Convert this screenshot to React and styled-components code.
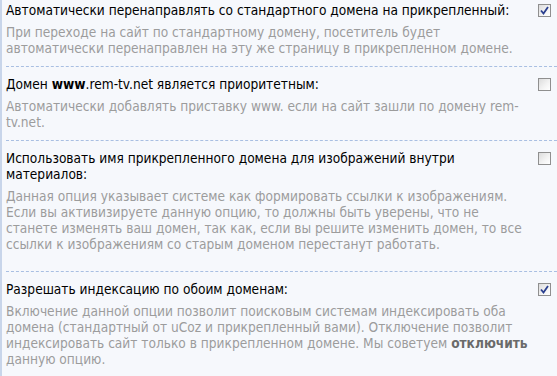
import React from 'react';
import styled, { createGlobalStyle } from 'styled-components';

const GlobalStyle = createGlobalStyle`
  html, body {
    margin: 0;
    padding: 0;
    background: #f6f8fc;
  }
`;

const Panel = styled.div`
  box-sizing: border-box;
  width: 557px;
  height: 376px;
  overflow: hidden;
  background: #f6f8fc;
  border-left: 2px solid #c8d5ea;
  padding: 2px 0 0 4px;
  font-family: 'DejaVu Sans Condensed', 'DejaVu Sans', sans-serif;
  font-size: 13.6px;
  line-height: 16px;
`;

const Row = styled.div`
  display: grid;
  grid-template-columns: 528px 1fr;
  padding: ${(p) => (p.first ? '0' : '9px')} 0 ${(p) => 10 + (p.extra || 0)}px 0;
  border-bottom: ${(p) => (p.last ? 'none' : '1px dashed #a9bfe2')};
`;

const Title = styled.div`
  color: #000;
  b {
    font-weight: bold;
  }
`;

const Desc = styled.div`
  color: #9c9c9c;
  margin-top: 6px;
  b {
    color: #6a6a6a;
    font-weight: bold;
  }
`;

const Box = styled.span`
  box-sizing: border-box;
  display: flex;
  align-items: center;
  justify-content: center;
  width: 13px;
  height: 13px;
  margin: 2px 0 0 4px;
  border: 1px solid #8f8f8f;
  background: linear-gradient(135deg, #dcdcdc 0%, #f4f4f4 60%, #ffffff 100%);
`;

const Check = ({ on }) => (
  <Box>
    {on && (
      <svg width="9" height="9" viewBox="0 0 9 9">
        <path d="M1 4.5 L3.5 7.5 L8 1" fill="none" stroke="#2a3f8f" strokeWidth="1.8" />
      </svg>
    )}
  </Box>
);

const options = [
  {
    title: 'Автоматически перенаправлять со стандартного домена на прикрепленный:',
    desc: 'При переходе на сайт по стандартному домену, посетитель будет автоматически перенаправлен на эту же страницу в прикрепленном домене.',
    on: true,
  },
  {
    title: (
      <>
        Домен <b>www</b>.rem-tv.net является приоритетным:
      </>
    ),
    desc: 'Автоматически добавлять приставку www. если на сайт зашли по домену rem-tv.net.',
    on: false,
  },
  {
    title: 'Использовать имя прикрепленного домена для изображений внутри материалов:',
    desc: 'Данная опция указывает системе как формировать ссылки к изображениям. Если вы активизируете данную опцию, то должны быть уверены, что не станете изменять ваш домен, так как, если вы решите изменить домен, то все ссылки к изображениям со старым доменом перестанут работать.',
    on: false,
    extra: 9,
  },
  {
    title: 'Разрешать индексацию по обоим доменам:',
    desc: (
      <>
        Включение данной опции позволит поисковым системам индексировать оба домена (стандартный от uCoz и прикрепленный
        вами). Отключение позволит индексировать сайт только в прикрепленном домене. Мы советуем <b>отключить</b> данную
        опцию.
      </>
    ),
    on: true,
  },
];

export default function App() {
  return (
    <>
      <GlobalStyle />
      <Panel>
        {options.map((o, i) => (
          <Row key={i} first={i === 0} last={i === options.length - 1} extra={o.extra}>
            <div>
              <Title>{o.title}</Title>
              <Desc>{o.desc}</Desc>
            </div>
            <Check on={o.on} />
          </Row>
        ))}
      </Panel>
    </>
  );
}
